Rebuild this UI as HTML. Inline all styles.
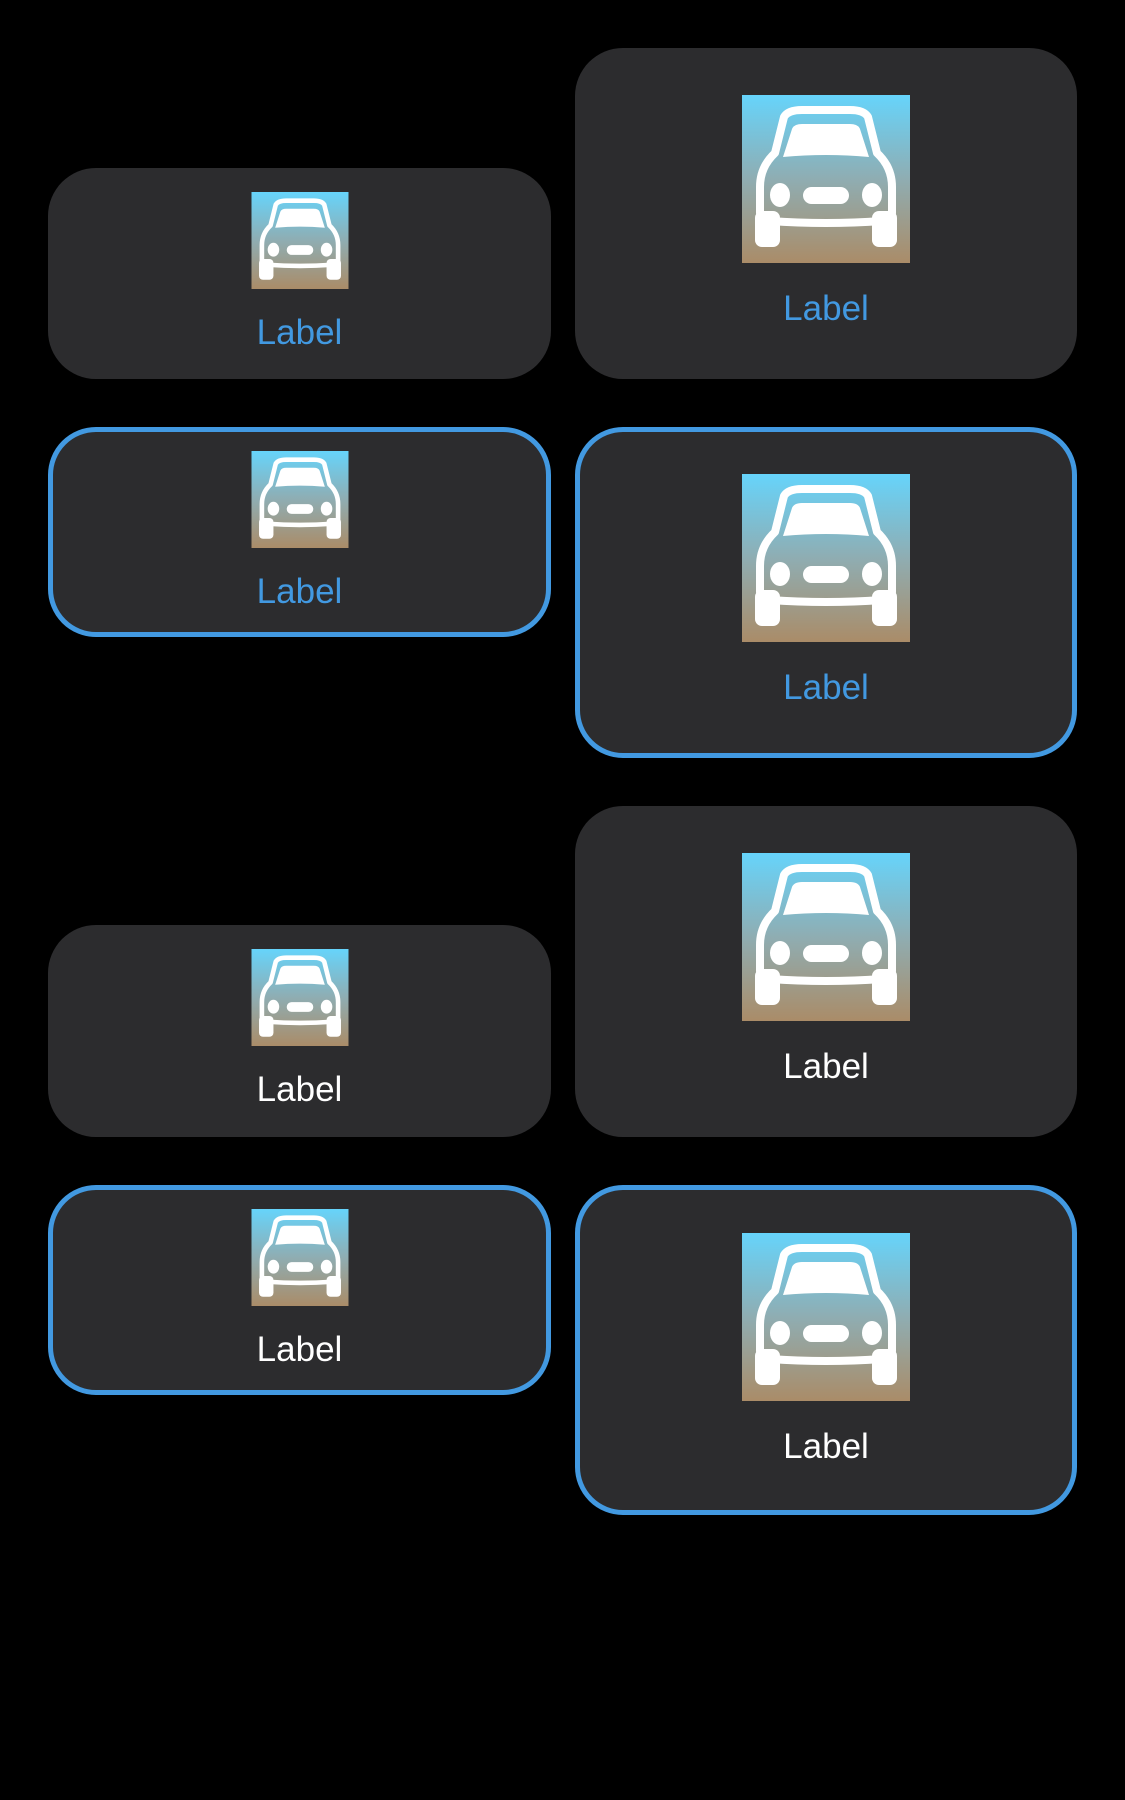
<!DOCTYPE html>
<html><head><meta charset="utf-8"><style>
html,body{margin:0;padding:0;background:#000;width:1125px;height:1800px;overflow:hidden;font-family:"Liberation Sans",sans-serif}
.c{position:absolute;background:#2c2c2e;border-radius:48px;box-sizing:border-box}
.b{border:5px solid #4299e1}
.i{position:absolute;left:50%;transform:translateX(-50%)}
.s{width:97px;height:97px}
.l{width:168px;height:168px}
.t{position:absolute;left:0;right:0;text-align:center;font-size:35px;line-height:40px}
.blue{color:#4299e1}.white{color:#fff}
</style></head><body>
<svg width="0" height="0" style="position:absolute"><defs>
<linearGradient id="g" x1="0" y1="0" x2="0" y2="1"><stop offset="0" stop-color="#66d4fb"/><stop offset="0.5" stop-color="#8fadb2"/><stop offset="1" stop-color="#aa8c68"/></linearGradient>
<symbol id="car" viewBox="0 0 168 168">
<rect width="168" height="168" fill="url(#g)"/>
<rect x="13" y="116" width="25" height="36" rx="7" fill="#fff"/>
<rect x="130" y="116" width="25" height="36" rx="7" fill="#fff"/>
<path d="M42 22 Q46 15 60 15 L108 15 Q122 15 126 22 L135 58 Q150 72 150 92 L150 118 Q150 125 140 126 Q84 130 28 126 Q18 125 18 118 L18 92 Q18 72 33 58 Z" fill="none" stroke="#fff" stroke-width="8" stroke-linejoin="round"/>
<path d="M41 62 L50 34 Q52 29 60 29 L108 29 Q116 29 118 34 L127 62 Q84 58 41 62 Z" fill="#fff"/>
<ellipse cx="38" cy="100" rx="10" ry="12" fill="#fff"/>
<ellipse cx="130" cy="100" rx="10" ry="12" fill="#fff"/>
<rect x="61" y="92" width="46" height="17" rx="8.5" fill="#fff"/>
</symbol></defs></svg>

<div class="c" style="left:48px;top:168px;width:503px;height:211px"><svg class="i s" style="top:24px"><use href="#car"/></svg><div class="t blue" style="top:145px">Label</div></div>
<div class="c" style="left:575px;top:48px;width:502px;height:331px"><svg class="i l" style="top:47px"><use href="#car"/></svg><div class="t blue" style="top:241px">Label</div></div>

<div class="c b" style="left:48px;top:427px;width:503px;height:210px"><svg class="i s" style="top:19px"><use href="#car"/></svg><div class="t blue" style="top:140px">Label</div></div>
<div class="c b" style="left:575px;top:427px;width:502px;height:331px"><svg class="i l" style="top:42px"><use href="#car"/></svg><div class="t blue" style="top:236px">Label</div></div>

<div class="c" style="left:48px;top:925px;width:503px;height:212px"><svg class="i s" style="top:24px"><use href="#car"/></svg><div class="t white" style="top:145px">Label</div></div>
<div class="c" style="left:575px;top:806px;width:502px;height:331px"><svg class="i l" style="top:47px"><use href="#car"/></svg><div class="t white" style="top:241px">Label</div></div>

<div class="c b" style="left:48px;top:1185px;width:503px;height:210px"><svg class="i s" style="top:19px"><use href="#car"/></svg><div class="t white" style="top:140px">Label</div></div>
<div class="c b" style="left:575px;top:1185px;width:502px;height:330px"><svg class="i l" style="top:43px"><use href="#car"/></svg><div class="t white" style="top:237px">Label</div></div>
</body></html>
